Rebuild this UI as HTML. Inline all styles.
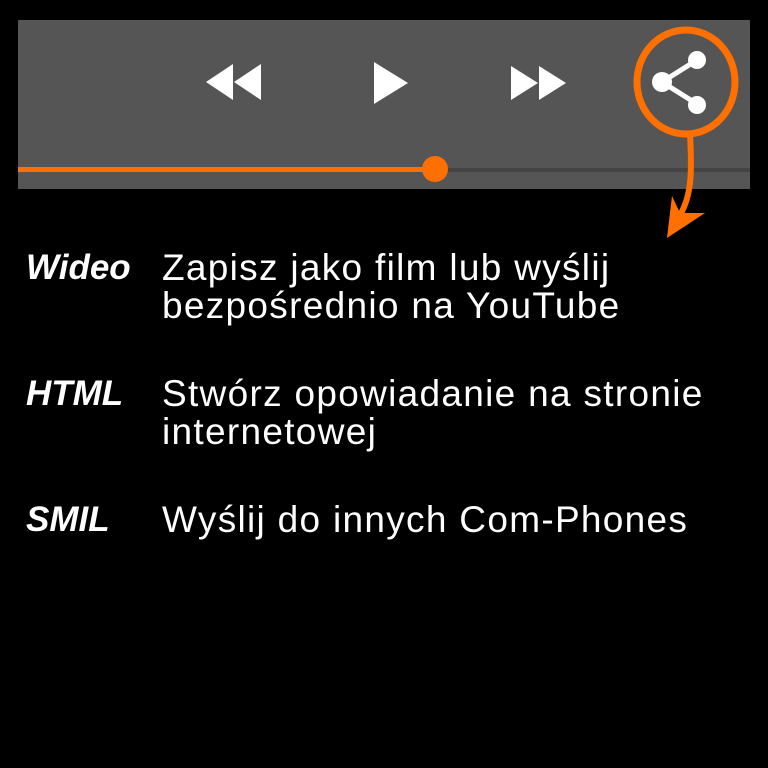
<!DOCTYPE html>
<html><head><style>
html,body{margin:0;padding:0;background:#000;width:768px;height:768px;overflow:hidden;position:relative;font-family:"Liberation Sans",sans-serif;color:#fff}
.panel{position:absolute;left:18px;top:20px;width:732px;height:169px;background:#555}
.row{position:absolute;left:0;width:768px;font-size:37px;line-height:38px}
.lab{position:absolute;left:26px;font-weight:bold;font-style:italic;font-size:35px}
.desc{position:absolute;left:162px;letter-spacing:1.3px;white-space:nowrap}
</style></head><body>
<div class="panel"></div>
<svg width="768" height="768" style="position:absolute;left:0;top:0">
<rect x="18" y="168" width="732" height="4" fill="#444"/>
<rect x="18" y="167" width="417" height="5" fill="#ff7000"/>
<circle cx="435" cy="169" r="13" fill="#ff7000"/>
<polygon points="206,82 233,64 233,100" fill="#fff"/>
<polygon points="234,82 261,64 261,100" fill="#fff"/>
<polygon points="374,62 408,83 374,104" fill="#fff"/>
<polygon points="511,66 538,83 511,100" fill="#fff"/>
<polygon points="539,66 566,83 539,100" fill="#fff"/>
<ellipse cx="686" cy="82" rx="49" ry="52" fill="none" stroke="#ff7000" stroke-width="7"/>
<line x1="662" y1="82" x2="697" y2="60" stroke="#fff" stroke-width="5"/>
<line x1="662" y1="82" x2="697" y2="104" stroke="#fff" stroke-width="5"/>
<circle cx="697" cy="60" r="9" fill="#fff"/>
<circle cx="662" cy="82" r="10" fill="#fff"/>
<circle cx="697" cy="105" r="9" fill="#fff"/>
<path d="M690 134 C692 170 692 195 680 215" fill="none" stroke="#ff7000" stroke-width="6"/>
<polygon points="667,238 672,196 680,213 705,213" fill="#ff7000"/>
</svg>
<div class="row" style="top:249px"><span class="lab">Wideo</span><span class="desc">Zapisz jako film lub wyślij<br>bezpośrednio na YouTube</span></div>
<div class="row" style="top:375px"><span class="lab">HTML</span><span class="desc">Stwórz opowiadanie na stronie<br>internetowej</span></div>
<div class="row" style="top:501px"><span class="lab">SMIL</span><span class="desc">Wyślij do innych Com-Phones</span></div>
</body></html>
